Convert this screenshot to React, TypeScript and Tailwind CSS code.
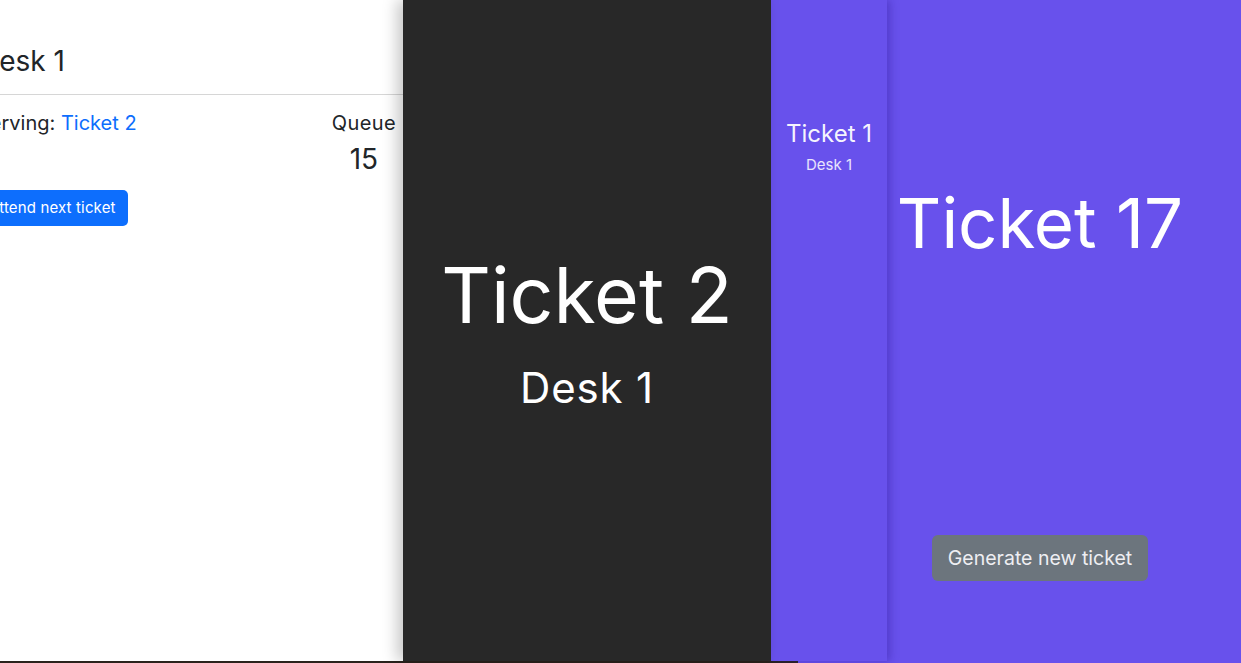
import type { FC } from 'react';

const DeskPanel: FC = () => (
  <div className="w-[403px] shrink-0 h-full bg-white overflow-hidden text-[#212529]">
    {/* content is scrolled a bit to the left, so the first letters are cut */}
    <div className="ml-[-23px] w-[426px] pr-[7px]">
      <h2 className="mt-[45px] mb-[15px] pl-[2px] text-[28px] leading-[1.2] font-normal">Desk 1</h2>
      <hr className="border-0 border-t border-[#d6d6d6] -mr-[7px]" />
      <div className="mt-[16px] flex justify-between items-start">
        <div className="text-[20px] leading-[1.2]">
          Serving: <span className="text-[#0d6efd]">Ticket 2</span>
        </div>
        <div className="flex flex-col items-center">
          <span className="text-[20px] leading-[1.2] tracking-[0.02em]">Queue</span>
          <span className="mt-[8px] text-[28px] leading-[1.2]">15</span>
        </div>
      </div>
      <button className="mt-[14px] h-[36px] px-[12px] rounded-[5px] bg-[#0d6efd] text-white text-[15px] leading-[24px] tracking-[0.01em]">
        Attend next ticket
      </button>
    </div>
  </div>
);

const CurrentPanel: FC = () => (
  <div className="relative z-20 w-[368px] shrink-0 h-full bg-[#282828] text-white flex flex-col items-center justify-center pt-[5px] shadow-[-6px_0_14px_rgba(0,0,0,0.22)]">
    <div className="text-[77px] leading-none">Ticket 2</div>
    <div className="mt-[33px] text-[42px] leading-none tracking-[0.02em]">Desk 1</div>
  </div>
);

const HistoryPanel: FC = () => (
  <div className="relative z-10 w-[116px] shrink-0 h-full bg-[#6851ec] flex flex-col items-center pt-[120px] shadow-[3px_0_8px_rgba(40,20,140,0.35)]">
    <div className="text-[24px] leading-[1.2] text-white/95">Ticket 1</div>
    <div className="mt-[7px] text-[15px] leading-[1.2] text-white/85">Desk 1</div>
  </div>
);

const NewTicketPanel: FC = () => (
  <div className="flex-1 h-full bg-[#6851ec]">
    <div className="w-[306px] flex flex-col items-center pt-[189px]">
      <div className="text-[69px] leading-none text-white">Ticket 17</div>
      <button className="mt-[277px] h-[46px] px-[16px] rounded-[6px] bg-[#6c757d] text-[#eeeef2] text-[19.5px] leading-[30px]">
        Generate new ticket
      </button>
    </div>
  </div>
);

const App: FC = () => {
  return (
    <div className="w-[1241px] h-[663px] overflow-hidden flex flex-col font-['Inter',sans-serif]">
      <div className="flex h-[661px]">
        <DeskPanel />
        <CurrentPanel />
        <HistoryPanel />
        <NewTicketPanel />
      </div>
      <div className="flex h-[2px]">
        <div className="w-[798px] bg-[#2a221c]" />
        <div className="flex-1 bg-[#6851ec]" />
      </div>
    </div>
  );
};

export default App;
